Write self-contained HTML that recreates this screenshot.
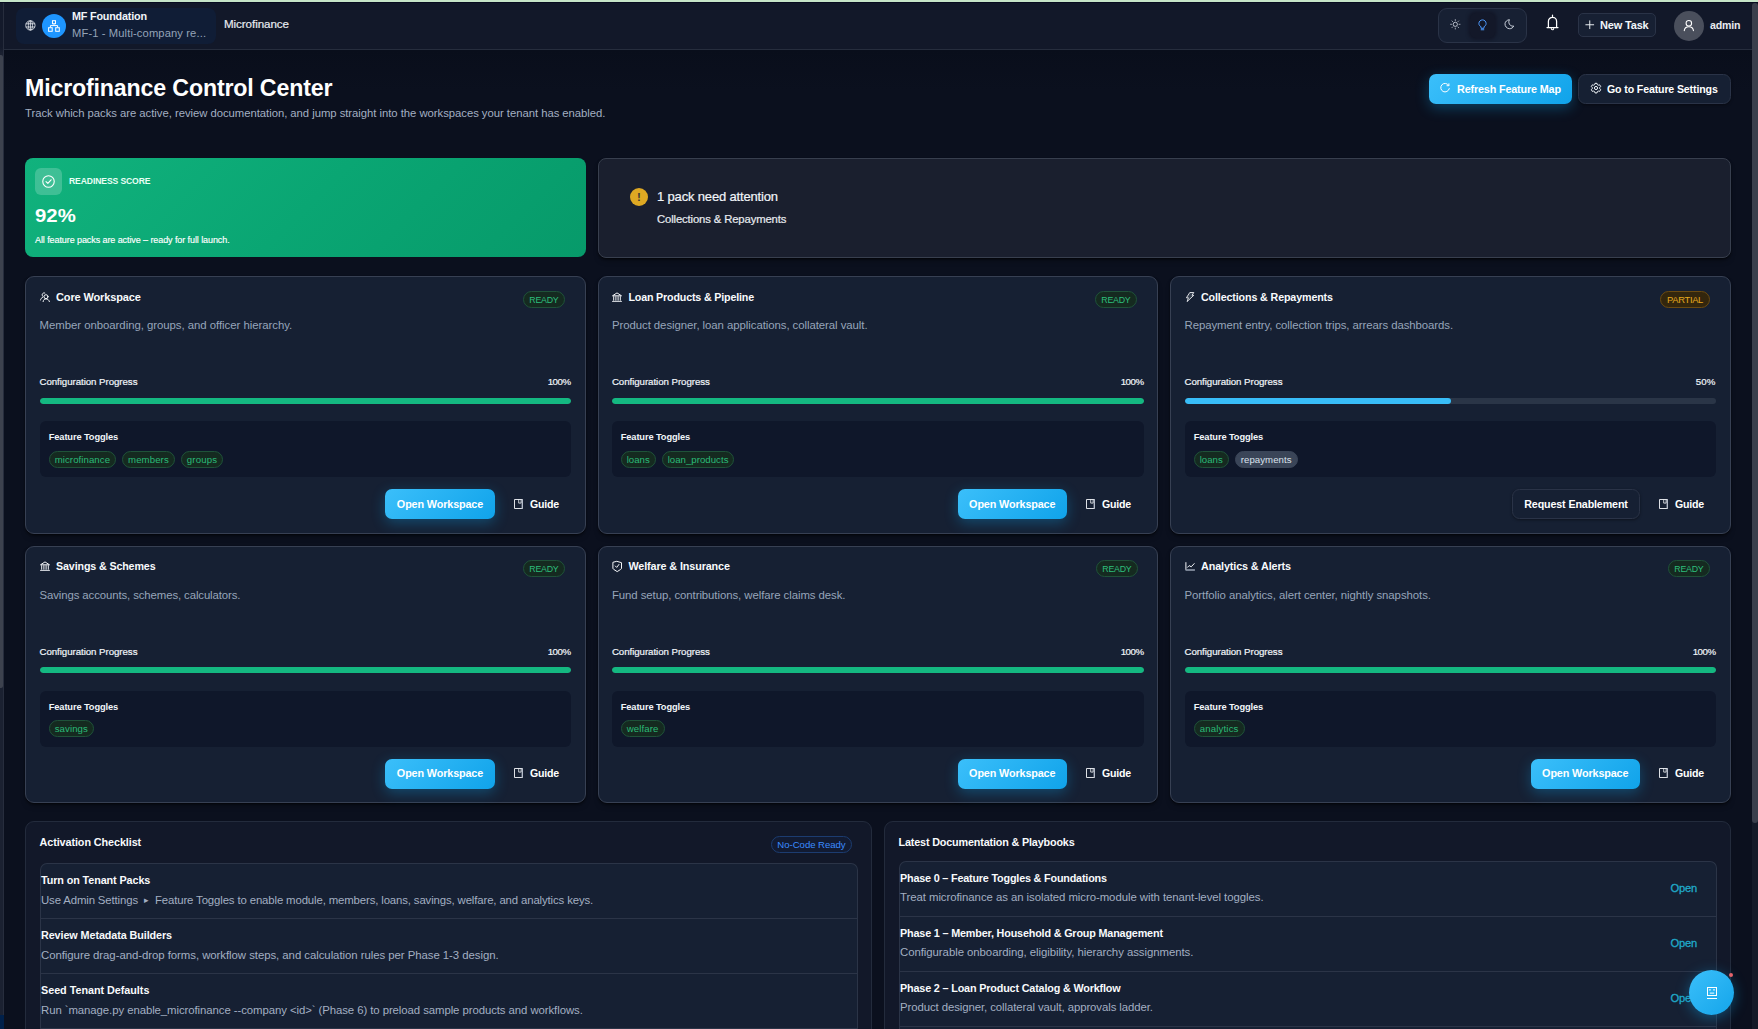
<!DOCTYPE html>
<html><head><meta charset="utf-8"><title>Microfinance Control Center</title>
<style>
*{box-sizing:border-box;margin:0;padding:0}
html,body{width:1758px;height:1029px;overflow:hidden;background:#0b101e;font-family:"Liberation Sans",sans-serif;color:#f1f5f9}
.abs{position:absolute}
#root{position:absolute;left:0;top:0;width:1758px;height:1029px;overflow:hidden}
#topstrip{left:0;top:0;width:1758px;height:2px;background:#c6e5c8}
#topline{left:0;top:2px;width:1758px;height:1px;background:#070b1f}
#header{left:4px;top:3px;width:1748px;height:47px;background:#121829;border-bottom:1px solid #262d3d}
#side{left:0;top:3px;width:4px;height:1026px;background:linear-gradient(180deg,#141a2b 0,#141a2b 44px,#1b2131 50px);border-right:1px solid #272d3d}
#sidethumb{left:0;top:55px;width:3px;height:633px;background:#3d424e;border-radius:0 2px 2px 0}
#sideblue{left:0;top:1015px;width:4px;height:14px;background:#00204a}
#sbtrack{left:1752px;top:3px;width:6px;height:1026px;background:#141a28}
#sbthumb{left:1752px;top:3px;width:6px;height:820px;background:#3a3f4c;border-radius:3px}
#main{left:4px;top:50px;width:1748px;height:979px;background:linear-gradient(180deg,#090e1b 0,#0b101e 40px)}

#pill{left:16px;top:8px;width:200px;height:36px;background:#101d36;border-radius:8px}
#globe{left:24.800px;top:19.700px;width:10.800px;height:10.800px}
#orgav{left:42px;top:14px;width:24px;height:24px;border-radius:50%;background:#1e96ff}
#orgname{left:72px;top:9px;font-size:11px;font-weight:700;color:#f1f5f9;line-height:14px;white-space:nowrap}
#orgsub{left:72px;top:26px;font-size:11px;color:#94a3b8;line-height:14px;white-space:nowrap}
#crumb{left:224px;top:16px;font-size:12px;line-height:16px;color:#e8ebf0;white-space:nowrap}
#tog{left:1438px;top:8px;width:89px;height:35px;border:1px solid #2a3347;border-radius:9px;background:#172033}
#togsel{left:1470px;top:13px;width:25px;height:25px;border-radius:6px;background:#131829;box-shadow:0 0 3px 2px #131829}
#newtask{left:1578px;top:13px;width:78px;height:24px;border:1px solid #2a3347;border-radius:5px;background:#172033}
#ntxt{left:1600px;top:18px;font-size:11.5px;line-height:14px;font-weight:700;color:#f1f5f9;white-space:nowrap}
#uav{left:1674px;top:11px;width:30px;height:30px;border-radius:50%;background:#4a4f5c}
#uname{left:1710px;top:18px;font-size:11.5px;line-height:14px;font-weight:700;color:#e8ebf0;white-space:nowrap}
svg{position:absolute;overflow:visible}

#title{left:25px;top:72px;font-size:24px;line-height:32px;font-weight:700;color:#fff;white-space:nowrap;letter-spacing:-0.2px}
#subtitle{left:25px;top:106px;font-size:11px;line-height:14px;color:#a3afc2;white-space:nowrap}
.btnp{background:linear-gradient(135deg,#3bbffa 0%,#10a3ea 100%);border-radius:7px;box-shadow:0 4px 14px rgba(14,165,233,.33)}
.btnd{background:#162033;border:1px solid #2a3347;border-radius:7.500px;box-shadow:0 1px 3px rgba(0,0,0,.4)}
.bt{font-size:11.5px;line-height:14px;font-weight:700;color:#fff;white-space:nowrap}
#ready{left:25px;top:158px;width:561px;height:99px;border-radius:8px;background:linear-gradient(135deg,#11b27d 0%,#0aa673 50%,#079a6a 100%)}
#rdico{left:35px;top:168px;width:27px;height:27px;border-radius:6px;background:rgba(255,255,255,.2)}
#rdlab{left:69px;top:175px;font-size:8.5px;line-height:12px;font-weight:700;letter-spacing:.3px;color:#eafff5;white-space:nowrap}
#rdnum{left:35px;top:204px;font-size:18.500px;line-height:24px;font-weight:700;color:#fff;white-space:nowrap;transform:scaleX(1.1);transform-origin:0 50%}
#rdsub{left:35px;top:234px;font-size:8.5px;line-height:12px;color:#fff;-webkit-text-stroke:.15px #fff;white-space:nowrap}
#attn{left:598px;top:158px;width:1133px;height:100px;border-radius:8px;background:#1a1f2e;border:1px solid #383f4e;box-shadow:0 1px 2px rgba(0,0,0,.5),0 4px 6px -3px rgba(0,0,0,.55)}
#atico{left:630px;top:188px;width:18px;height:18px;border-radius:50%;background:#dea823;color:#3f3a33;font-size:11.500px;font-weight:700;text-align:center;line-height:18px}
#att1{left:657px;top:189px;font-size:12.5px;line-height:16px;color:#f1f5f9;white-space:nowrap}
#att2{left:657px;top:212px;font-size:11px;line-height:14px;color:#e8ebf0;white-space:nowrap}

.card{height:258px;border-radius:9px;background:#162033;border:1px solid #374053;box-shadow:0 1px 2px rgba(0,0,0,.5),0 4px 6px -3px rgba(0,0,0,.55)}
.card.r2{height:257px}
.r2 .ct{top:12px}.r2 .ci{top:14px}.r2 .badge{top:13px}.r2 .gt{top:219px}.r2 .gi{top:221px}.r2 .ow .bt{line-height:28px}
.re .bt{line-height:28px !important}
.ci{left:14px;top:15px;width:10px;height:10px}
.ci.sh{height:11px}
.ct{left:30px;top:13px;font-size:11.5px;line-height:14px;font-weight:700;color:#f8fafc;white-space:nowrap}
.badge{right:20px;top:14px;height:17px;border-radius:9px;font-size:9px;line-height:16px;padding:0 5.500px;white-space:nowrap;letter-spacing:.1px}
.br{background:#152a20;border:1px solid #1f5239;color:#2ebf7c}
.bp{padding:0 6px;background:#33260d;border:1px solid #6b4a10;color:#e6a91f}
.cd{left:13.5px;top:41px;font-size:11px;line-height:14px;color:#97a5ba;white-space:nowrap}
.pl{left:13.5px;top:98px;font-size:9.5px;line-height:13px;color:#f1f5f9;white-space:nowrap}
.pp{right:14.400px;top:98px;font-size:9.5px;line-height:13px;color:#f1f5f9;white-space:nowrap}
.bar{left:14px;right:14px;top:121px;height:6px;border-radius:3px;background:#2a3547;overflow:hidden}
.r2 .bar{top:120px}
.fg{height:6px;background:#14b881;border-radius:3px}
.fb{height:6px;background:#38bdf8;border-radius:3px}
.ftb{left:14px;right:14px;top:144px;height:56px;border-radius:6px;background:#0f172a}
.ftl{left:8.700px;top:10px;font-size:9.5px;line-height:13px;font-weight:700;color:#f1f5f9;white-space:nowrap}
.tags{left:8.700px;top:30px;white-space:nowrap;font-size:0}
.r2 .tags{top:29px}
.tag{display:inline-block;height:17px;border-radius:9px;font-size:9px;line-height:15px;padding:0 5px;margin-right:6px;vertical-align:top}
.tag.on{background:#152a20;border:1px solid #1f5239;color:#2bba78}
.tag.off{background:#3a4558;border:1px solid #3a4558;color:#dbe2ec}
#c1 .bar,#c1 .ftb,#c4 .bar,#c4 .ftb{left:13px;right:13px}
#c1 .ci,#c1 .ct,#c1 .cd,#c1 .pl,#c4 .ci,#c4 .ct,#c4 .cd,#c4 .pl{margin-left:-.6px}
#c1 .pp,#c4 .pp{margin-right:-1px}
#c4 .badge{right:19px}
#c0 .ow,#c3 .ow{width:110px}
.ow{right:90px;top:212px;width:109.500px;height:30px;text-align:center}
.re{right:90px;top:212px;width:128px;height:30px;text-align:center}
.ow .bt,.re .bt{line-height:30px}
.gi{right:62px;top:222px;width:9px;height:10px}
.gt{right:26px;top:220px}

.bcard{top:821px;height:230px;border-radius:9px;background:#121829;border:1px solid #232b3c}
.bh{top:835px;font-size:11px;line-height:14px;font-weight:700;color:#f8fafc;white-space:nowrap}
.list{border:1px solid #2b3447;border-radius:7px 7px 0 0;background:#162033;border-bottom:none}
.li{left:0;right:0;height:55px;border-bottom:1px solid #2b3447}
.lt{left:0;font-size:11px;line-height:14px;font-weight:700;color:#f8fafc;white-space:nowrap}
.ld{left:0;font-size:11px;line-height:14px;color:#a3afc2;white-space:nowrap}
.lo{right:19px;font-size:11px;line-height:14px;color:#20aac9;white-space:nowrap;margin-top:-1px;-webkit-text-stroke:.3px #20aac9}
#ncr{left:771px;top:836px;width:81px;height:17px;border-radius:9px;border:1px solid #1c3c70;background:#121b32;color:#3b8bff;font-size:9px;line-height:15px;text-align:center;white-space:nowrap}
#fab{left:1689px;top:970px;width:45px;height:45px;border-radius:50%;background:linear-gradient(135deg,#3bbffa,#14a5ea);box-shadow:0 3px 14px rgba(14,165,233,.4)}
#fabdot{left:1728.700px;top:972.700px;width:4.400px;height:4.400px;border-radius:50%;background:#e5636b}
.tri{display:inline-block;width:9px;text-align:center;font-size:9px;letter-spacing:0;vertical-align:.8px;margin:0 1px}
#att1,#att2,#crumb,.pl,.pp{-webkit-text-stroke:.2px currentColor}
</style><style id="fitcss">
#orgname{font-size:10.8px;letter-spacing:-0.197px}
#orgsub{font-size:11.2px;letter-spacing:0.113px}
#crumb{font-size:11.6px;letter-spacing:-0.067px}
#ntxt{font-size:11px;letter-spacing:-0.177px}
#uname{font-size:10.6px;letter-spacing:-0.176px}
#title{font-size:23.2px;letter-spacing:-0.165px}
#subtitle{font-size:11.3px;letter-spacing:-0.033px}
#b_ref{font-size:10.8px;letter-spacing:-0.156px}
#b_set{font-size:10.6px;letter-spacing:-0.134px}
#rdlab{font-size:8.6px;letter-spacing:-0.114px}
#rdsub{font-size:9px;letter-spacing:-0.085px}
#att1{font-size:13px;letter-spacing:-0.166px}
#att2{font-size:11.3px;letter-spacing:-0.135px}
#c0 .ct{font-size:11px;letter-spacing:-0.139px}
#c1 .ct{font-size:10.7px;letter-spacing:-0.164px}
#c2 .ct{font-size:10.7px;letter-spacing:-0.123px}
#c3 .ct{font-size:10.7px;letter-spacing:-0.125px}
#c4 .ct{font-size:10.8px;letter-spacing:-0.112px}
#c5 .ct{font-size:10.8px;letter-spacing:-0.119px}
#c0 .cd{font-size:11.4px;letter-spacing:-0.043px}
#c1 .cd{font-size:11.4px;letter-spacing:-0.062px}
#c2 .cd{font-size:11.4px;letter-spacing:-0.077px}
#c3 .cd{font-size:11.4px;letter-spacing:-0.109px}
#c4 .cd{font-size:11.4px;letter-spacing:-0.069px}
#c5 .cd{font-size:11.4px;letter-spacing:-0.057px}
.pl{font-size:9.7px;letter-spacing:-0.052px}
.pp{font-size:9.7px;letter-spacing:-0.460px}
#c2 .pp{font-size:9.7px;letter-spacing:0.155px}
.ftl{font-size:9.3px;letter-spacing:-0.109px}
.ow .bt{font-size:10.8px;letter-spacing:-0.124px}
.re .bt{font-size:10.7px;letter-spacing:-0.125px}
.gt{font-size:10.6px;letter-spacing:-0.183px}
.br{font-size:8.8px;letter-spacing:-0.228px}
.bp{font-size:9.4px;letter-spacing:-0.320px}
#ncr{font-size:9.6px;letter-spacing:-0.041px}
#bh1{font-size:10.8px;letter-spacing:-0.079px}
#bh2{font-size:10.8px;letter-spacing:-0.161px}
#la .li:nth-child(1) .lt{font-size:10.8px;letter-spacing:-0.099px}
#la .li:nth-child(2) .lt{font-size:10.8px;letter-spacing:-0.092px}
#la .li:nth-child(3) .lt{font-size:10.8px;letter-spacing:-0.032px}
#la .li:nth-child(1) .ld{font-size:11.4px;letter-spacing:-0.137px}
#la .li:nth-child(2) .ld{font-size:11.4px;letter-spacing:-0.051px}
#la .li:nth-child(3) .ld{font-size:11.4px;letter-spacing:-0.083px}
#lb .li:nth-child(1) .lt{font-size:10.8px;letter-spacing:-0.184px}
#lb .li:nth-child(2) .lt{font-size:10.8px;letter-spacing:-0.169px}
#lb .li:nth-child(3) .lt{font-size:10.8px;letter-spacing:-0.162px}
#lb .li:nth-child(1) .ld{font-size:11.4px;letter-spacing:-0.062px}
#lb .li:nth-child(2) .ld{font-size:11.4px;letter-spacing:-0.057px}
#lb .li:nth-child(3) .ld{font-size:11.4px;letter-spacing:-0.091px}
.lo{font-size:11.2px;letter-spacing:-0.192px}
.tag.t_microfinance{font-size:9.6px;letter-spacing:0.084px}
.tag.t_members{font-size:9.6px;letter-spacing:0.102px}
.tag.t_groups{font-size:9.6px;letter-spacing:0.159px}
.tag.t_loans{font-size:9.6px;letter-spacing:0.013px}
.tag.t_loan_products{font-size:9.6px;letter-spacing:0.040px}
.tag.t_repayments{font-size:9.6px;letter-spacing:0.087px}
.tag.t_savings{font-size:9.6px;letter-spacing:0.096px}
.tag.t_welfare{font-size:9.6px;letter-spacing:0.137px}
.tag.t_analytics{font-size:9.6px;letter-spacing:0.175px}
</style></head><body><div id="root">
<div class="abs" id="main"></div>
<div class="abs" id="header"></div>

<div class="abs" id="pill"></div>
<svg id="globe" class="abs" viewBox="0 0 12 12" fill="none" stroke="#e8ebf0" stroke-width="0.9"><circle cx="6" cy="6" r="5.2"/><ellipse cx="6" cy="6" rx="2.3" ry="5.2"/><path d="M1 4.2h10M1 7.8h10M6 .8v10.4"/></svg>
<div class="abs" id="orgav"></div>
<svg class="abs" style="left:48px;top:20px;width:12px;height:12px" viewBox="0 0 12 12" fill="none" stroke="#fff" stroke-width="1"><rect x="4.500" y=".7" width="3" height="3"/><rect x=".6" y="7.700" width="3.600" height="3.600"/><rect x="7.700" y="7.700" width="3.600" height="3.600"/><path d="M6 4.200v1.400M2.400 7.200V5.600h7.200v1.600"/></svg>
<div class="abs" id="orgname">MF Foundation</div>
<div class="abs" id="orgsub">MF-1 - Multi-company re...</div>
<div class="abs" id="crumb">Microfinance</div>
<div class="abs" id="tog"></div><div class="abs" id="togsel"></div>
<svg class="abs" style="left:1449.700px;top:19px;width:10.600px;height:10.600px" viewBox="0 0 12 12" fill="none" stroke="#d5dbe6" stroke-width=".95" stroke-linecap="butt"><circle cx="6" cy="6" r="2.400"/><path d="M6 .2v2M6 9.800v2M.2 6h2M9.800 6h2M1.900 1.900l1.400 1.400M8.700 8.700l1.400 1.400M1.900 10.100l1.400-1.400M8.700 3.300l1.400-1.400" stroke-width=".8"/></svg>
<svg class="abs" style="left:1477.600px;top:18.500px;width:9px;height:12px" viewBox="0 0 9 12" fill="none" stroke="#4d9aff" stroke-width="1" stroke-linecap="round" stroke-linejoin="round"><path d="M3 8.900V7.700C1.700 7.100.9 5.900.9 4.500.9 2.500 2.500.9 4.500.9s3.600 1.600 3.600 3.600c0 1.400-.8 2.600-2.100 3.200v1.200z"/><path d="M3.200 10.800h2.600" stroke-width="1.100"/></svg>
<svg class="abs" style="left:1504px;top:19.200px;width:10.300px;height:10.300px" viewBox="0 0 12 12" fill="none" stroke="#d5dbe6" stroke-width="1.100" stroke-linejoin="round"><path d="M6.300.8C5 3.300 5.600 5.900 7.400 7.300c1.200.9 2.600 1.200 3.900.9C10.400 10.300 8.400 11.500 6.200 11.300 3.200 11 .9 8.400 1.200 5.400 1.400 3.100 3.500 1.100 6.300.8z"/></svg>
<svg class="abs" style="left:1546px;top:14px;width:13px;height:17px" viewBox="0 0 13 17" fill="none" stroke="#fff" stroke-width="1.250" stroke-linejoin="round" stroke-linecap="round"><path d="M2.400 13.500V7.300C2.400 5 4.200 3.300 6.500 3.300S10.600 5 10.600 7.300V13.500M1 13.600H12M6.500 1.200V3.200"/><path d="M5.300 14.600a1.200 1.200 0 0 0 2.400 0" stroke-width="1.100"/></svg>
<div class="abs" id="newtask"></div>
<svg class="abs" style="left:1584.500px;top:19.500px;width:9.500px;height:9.500px" viewBox="0 0 11 11" fill="none" stroke="#f1f5f9" stroke-width="1.1"><path d="M5.500.5v10M.5 5.500h10"/></svg>
<div class="abs" id="ntxt">New Task</div>
<div class="abs" id="uav"></div>
<svg class="abs" style="left:1682.700px;top:19px;width:11.700px;height:12.500px" viewBox="0 0 14 15" fill="none" stroke="#fff" stroke-width="1.300"><circle cx="7" cy="5" r="3.300"/><path d="M1.500 14c.3-3 2.600-4.800 5.500-4.800s5.200 1.800 5.500 4.800" stroke-linecap="round"/></svg>
<div class="abs" id="uname">admin</div>

<div class="abs" id="title">Microfinance Control Center</div>
<div class="abs" id="subtitle">Track which packs are active, review documentation, and jump straight into the workspaces your tenant has enabled.</div>
<div class="abs btnp" style="left:1429px;top:74px;width:143px;height:30px"></div>
<svg class="abs" style="left:1440px;top:83.400px;width:10px;height:10px" viewBox="0 0 10 10" fill="none" stroke="#fff" stroke-width="1" stroke-linecap="round"><path d="M8.700 2.300A4.300 4.300 0 1 0 9.300 5.600"/><path d="M8.900.8v1.900H7"/></svg>
<div class="abs bt" id="b_ref" style="left:1457px;top:82px">Refresh Feature Map</div>
<div class="abs btnd" style="left:1578px;top:74px;width:153px;height:30px"></div>
<svg class="abs" style="left:1591.200px;top:83px;width:10px;height:10px" viewBox="0 0 12 12" fill="none" stroke="#f1f5f9" stroke-width="1.200" stroke-linejoin="round"><circle cx="6" cy="6" r="1.900"/><path d="M4.800.9h2.400l.4 1.500 1.300.7 1.500-.4 1.200 2.100-1.100 1.100v1.500l1.100 1.100-1.200 2.100-1.500-.4-1.300.7-.4 1.500H4.800l-.4-1.500-1.300-.7-1.500.4L.4 8.500l1.100-1.100V5.900L.4 4.800l1.200-2.100 1.500.4 1.300-.7z" transform="translate(0 -0.500)"/></svg>
<div class="abs bt" id="b_set" style="left:1607px;top:82px">Go to Feature Settings</div>
<div class="abs" id="ready"></div><div class="abs" id="rdico"></div>
<svg class="abs" style="left:42px;top:175px;width:13px;height:13px" viewBox="0 0 12 12" fill="none" stroke="#fff" stroke-width="1"><circle cx="6" cy="6" r="5.300"/><path d="M3.700 6.100l1.700 1.700 3-3.400" stroke-linecap="round" stroke-linejoin="round"/></svg>
<div class="abs" id="rdlab">READINESS SCORE</div>
<div class="abs" id="rdnum">92%</div>
<div class="abs" id="rdsub">All feature packs are active – ready for full launch.</div>
<div class="abs" id="attn"></div><div class="abs" id="atico">!</div>
<div class="abs" id="att1">1 pack need attention</div>
<div class="abs" id="att2">Collections &amp; Repayments</div>
<!--CARDS-->
<div class="abs card" id="c0" style="left:25px;top:276px;width:561px">
<svg class="ci" viewBox="0 0 10 10" fill="none" stroke="#f4f6f9" stroke-width="1" stroke-linecap="round"><circle cx="6" cy="4.700" r="2"/><path d="M3.100 9.600C3.300 7.800 4.400 6.900 6 6.900s2.900.9 3.400 2.700"/><path d="M4.800 1C3.600.5 2.300 1.300 2.200 2.700c0 .8.300 1.400.8 1.800M2.600 5.300C1.400 5.900.700 6.800.5 8"/></svg>
<div class="abs ct">Core Workspace</div>
<div class="abs badge br">READY</div>
<div class="abs cd">Member onboarding, groups, and officer hierarchy.</div>
<div class="abs pl">Configuration Progress</div>
<div class="abs pp">100%</div>
<div class="abs bar"><div class="fg" style="width:100%"></div></div>
<div class="abs ftb"><div class="abs ftl">Feature Toggles</div><div class="abs tags"><span class="tag on t_microfinance">microfinance</span><span class="tag on t_members">members</span><span class="tag on t_groups">groups</span></div></div>
<div class="abs btnp ow"><span class="bt">Open Workspace</span></div>
<svg class="gi" viewBox="0 0 9 10" fill="none" stroke="#f4f6f9" stroke-width=".9"><path d="M.5.500h8v9h-8z"/><path d="M8.200.5v9" stroke="#aab2c2" stroke-width="1.200"/><path d="M4.700.5v3.600h2.400V.5" stroke-width=".8"/></svg><div class="abs bt gt">Guide</div>
</div>
<div class="abs card" id="c1" style="left:598px;top:276px;width:560px">
<svg class="ci" viewBox="0 0 10 10" fill="none" stroke="#f4f6f9" stroke-width="1" stroke-linejoin="round"><path d="M.5 3.800 5 .9l4.500 2.900z"/><path d="M1.700 4.200v4.500M3.900 4.200v4.500M6.100 4.200v4.500M8.300 4.200v4.500" stroke-width="1"/><path d="M.1 9.400h9.800" stroke-width=".9"/></svg>
<div class="abs ct">Loan Products &amp; Pipeline</div>
<div class="abs badge br">READY</div>
<div class="abs cd">Product designer, loan applications, collateral vault.</div>
<div class="abs pl">Configuration Progress</div>
<div class="abs pp">100%</div>
<div class="abs bar"><div class="fg" style="width:100%"></div></div>
<div class="abs ftb"><div class="abs ftl">Feature Toggles</div><div class="abs tags"><span class="tag on t_loans">loans</span><span class="tag on t_loan_products">loan_products</span></div></div>
<div class="abs btnp ow"><span class="bt">Open Workspace</span></div>
<svg class="gi" viewBox="0 0 9 10" fill="none" stroke="#f4f6f9" stroke-width=".9"><path d="M.5.500h8v9h-8z"/><path d="M8.200.5v9" stroke="#aab2c2" stroke-width="1.200"/><path d="M4.700.5v3.600h2.400V.5" stroke-width=".8"/></svg><div class="abs bt gt">Guide</div>
</div>
<div class="abs card" id="c2" style="left:1170px;top:276px;width:561px">
<svg class="ci" viewBox="0 0 10 10" fill="none" stroke="#f4f6f9" stroke-width="1" stroke-linejoin="round"><path d="M4.800.5H8.800L7 3.300H8.800L2.100 9.600 3.400 5.800H1.400z" fill="#f4f6f9" fill-opacity=".15" stroke-width=".85"/></svg>
<div class="abs ct">Collections &amp; Repayments</div>
<div class="abs badge bp">PARTIAL</div>
<div class="abs cd">Repayment entry, collection trips, arrears dashboards.</div>
<div class="abs pl">Configuration Progress</div>
<div class="abs pp">50%</div>
<div class="abs bar"><div class="fb" style="width:50%"></div></div>
<div class="abs ftb"><div class="abs ftl">Feature Toggles</div><div class="abs tags"><span class="tag on t_loans">loans</span><span class="tag off t_repayments">repayments</span></div></div>
<div class="abs btnd re"><span class="bt">Request Enablement</span></div>
<svg class="gi" viewBox="0 0 9 10" fill="none" stroke="#f4f6f9" stroke-width=".9"><path d="M.5.500h8v9h-8z"/><path d="M8.200.5v9" stroke="#aab2c2" stroke-width="1.200"/><path d="M4.700.5v3.600h2.400V.5" stroke-width=".8"/></svg><div class="abs bt gt">Guide</div>
</div>
<div class="abs card r2" id="c3" style="left:25px;top:546px;width:561px">
<svg class="ci" viewBox="0 0 10 10" fill="none" stroke="#f4f6f9" stroke-width="1" stroke-linejoin="round"><path d="M.5 3.800 5 .9l4.500 2.900z"/><path d="M1.700 4.200v4.500M3.900 4.200v4.500M6.100 4.200v4.500M8.300 4.200v4.500" stroke-width="1"/><path d="M.1 9.400h9.800" stroke-width=".9"/></svg>
<div class="abs ct">Savings &amp; Schemes</div>
<div class="abs badge br">READY</div>
<div class="abs cd">Savings accounts, schemes, calculators.</div>
<div class="abs pl">Configuration Progress</div>
<div class="abs pp">100%</div>
<div class="abs bar"><div class="fg" style="width:100%"></div></div>
<div class="abs ftb"><div class="abs ftl">Feature Toggles</div><div class="abs tags"><span class="tag on t_savings">savings</span></div></div>
<div class="abs btnp ow"><span class="bt">Open Workspace</span></div>
<svg class="gi" viewBox="0 0 9 10" fill="none" stroke="#f4f6f9" stroke-width=".9"><path d="M.5.500h8v9h-8z"/><path d="M8.200.5v9" stroke="#aab2c2" stroke-width="1.200"/><path d="M4.700.5v3.600h2.400V.5" stroke-width=".8"/></svg><div class="abs bt gt">Guide</div>
</div>
<div class="abs card r2" id="c4" style="left:598px;top:546px;width:560px">
<svg class="ci sh" viewBox="0 0 10 11" fill="none" stroke="#f4f6f9" stroke-width="1" stroke-linejoin="round" stroke-linecap="round"><path d="M5.200.4 9.500 1.700V7c0 .6-.3 1.100-.8 1.400L5.200 10.600 1.700 8.400C1.200 8.100.9 7.600.9 7V1.700z"/><path d="M3.300 5l1.400 1.400 2.300-3"/></svg>
<div class="abs ct">Welfare &amp; Insurance</div>
<div class="abs badge br">READY</div>
<div class="abs cd">Fund setup, contributions, welfare claims desk.</div>
<div class="abs pl">Configuration Progress</div>
<div class="abs pp">100%</div>
<div class="abs bar"><div class="fg" style="width:100%"></div></div>
<div class="abs ftb"><div class="abs ftl">Feature Toggles</div><div class="abs tags"><span class="tag on t_welfare">welfare</span></div></div>
<div class="abs btnp ow"><span class="bt">Open Workspace</span></div>
<svg class="gi" viewBox="0 0 9 10" fill="none" stroke="#f4f6f9" stroke-width=".9"><path d="M.5.500h8v9h-8z"/><path d="M8.200.5v9" stroke="#aab2c2" stroke-width="1.200"/><path d="M4.700.5v3.600h2.400V.5" stroke-width=".8"/></svg><div class="abs bt gt">Guide</div>
</div>
<div class="abs card r2" id="c5" style="left:1170px;top:546px;width:561px">
<svg class="ci" viewBox="0 0 10 10" fill="none" stroke="#f4f6f9" stroke-width="1" stroke-linejoin="round" stroke-linecap="round"><path d="M.9 1.200v7.600" stroke-linecap="butt"/><path d="M.5 9h9.400" stroke="#9aa3b5" stroke-width="1.500" stroke-linecap="butt"/><path d="M2.500 6.300l1.700-1.700 2 1.200 3-3.200"/></svg>
<div class="abs ct">Analytics &amp; Alerts</div>
<div class="abs badge br">READY</div>
<div class="abs cd">Portfolio analytics, alert center, nightly snapshots.</div>
<div class="abs pl">Configuration Progress</div>
<div class="abs pp">100%</div>
<div class="abs bar"><div class="fg" style="width:100%"></div></div>
<div class="abs ftb"><div class="abs ftl">Feature Toggles</div><div class="abs tags"><span class="tag on t_analytics">analytics</span></div></div>
<div class="abs btnp ow"><span class="bt">Open Workspace</span></div>
<svg class="gi" viewBox="0 0 9 10" fill="none" stroke="#f4f6f9" stroke-width=".9"><path d="M.5.500h8v9h-8z"/><path d="M8.200.5v9" stroke="#aab2c2" stroke-width="1.200"/><path d="M4.700.5v3.600h2.400V.5" stroke-width=".8"/></svg><div class="abs bt gt">Guide</div>
</div>
<!--/CARDS-->

<div class="abs bcard" style="left:25px;width:847px"></div>
<div class="abs bh" id="bh1" style="left:39.500px">Activation Checklist</div>
<div class="abs" id="ncr">No-Code Ready</div>
<div class="abs list" id="la" style="left:40px;top:863px;width:818px;height:170px"><div class="abs li" style="top:0px"><div class="abs lt" style="top:9px">Turn on Tenant Packs</div><div class="abs ld" style="top:29px">Use Admin Settings <span class="tri">&#9656;</span> Feature Toggles to enable module, members, loans, savings, welfare, and analytics keys.</div></div><div class="abs li" style="top:55px"><div class="abs lt" style="top:9px">Review Metadata Builders</div><div class="abs ld" style="top:29px">Configure drag-and-drop forms, workflow steps, and calculation rules per Phase 1-3 design.</div></div><div class="abs li" style="top:110px"><div class="abs lt" style="top:9px">Seed Tenant Defaults</div><div class="abs ld" style="top:29px">Run `manage.py enable_microfinance --company &lt;id&gt;` (Phase 6) to preload sample products and workflows.</div></div></div>
<div class="abs bcard" style="left:884px;width:847px"></div>
<div class="abs bh" id="bh2" style="left:898.500px">Latest Documentation &amp; Playbooks</div>
<div class="abs list" id="lb" style="left:899px;top:861px;width:818px;height:170px"><div class="abs li" style="top:0px"><div class="abs lt" style="top:9px">Phase 0 – Feature Toggles &amp; Foundations</div><div class="abs ld" style="top:28px">Treat microfinance as an isolated micro-module with tenant-level toggles.</div><div class="abs lo" style="top:20px">Open</div></div><div class="abs li" style="top:55px"><div class="abs lt" style="top:9px">Phase 1 – Member, Household &amp; Group Management</div><div class="abs ld" style="top:28px">Configurable onboarding, eligibility, hierarchy assignments.</div><div class="abs lo" style="top:20px">Open</div></div><div class="abs li" style="top:110px"><div class="abs lt" style="top:9px">Phase 2 – Loan Product Catalog &amp; Workflow</div><div class="abs ld" style="top:28px">Product designer, collateral vault, approvals ladder.</div><div class="abs lo" style="top:20px">Open</div></div></div>
<div class="abs" id="fab"></div><div class="abs" id="fabdot"></div>
<svg class="abs" style="left:1707px;top:987px;width:10px;height:12px" viewBox="0 0 10 12" fill="none" stroke="#fff" stroke-width="1"><rect x=".5" y=".5" width="9" height="8"/><path d="M1.900 2.900h2M6 2.900h2M2.800 6.100h4.400M0 11.500h10"/></svg>
<div class="abs" id="side"></div><div class="abs" id="sidethumb"></div><div class="abs" id="sideblue"></div>
<div class="abs" id="sbtrack"></div><div class="abs" id="sbthumb"></div>
<div class="abs" id="topstrip"></div><div class="abs" id="topline"></div>
</div></body></html>
